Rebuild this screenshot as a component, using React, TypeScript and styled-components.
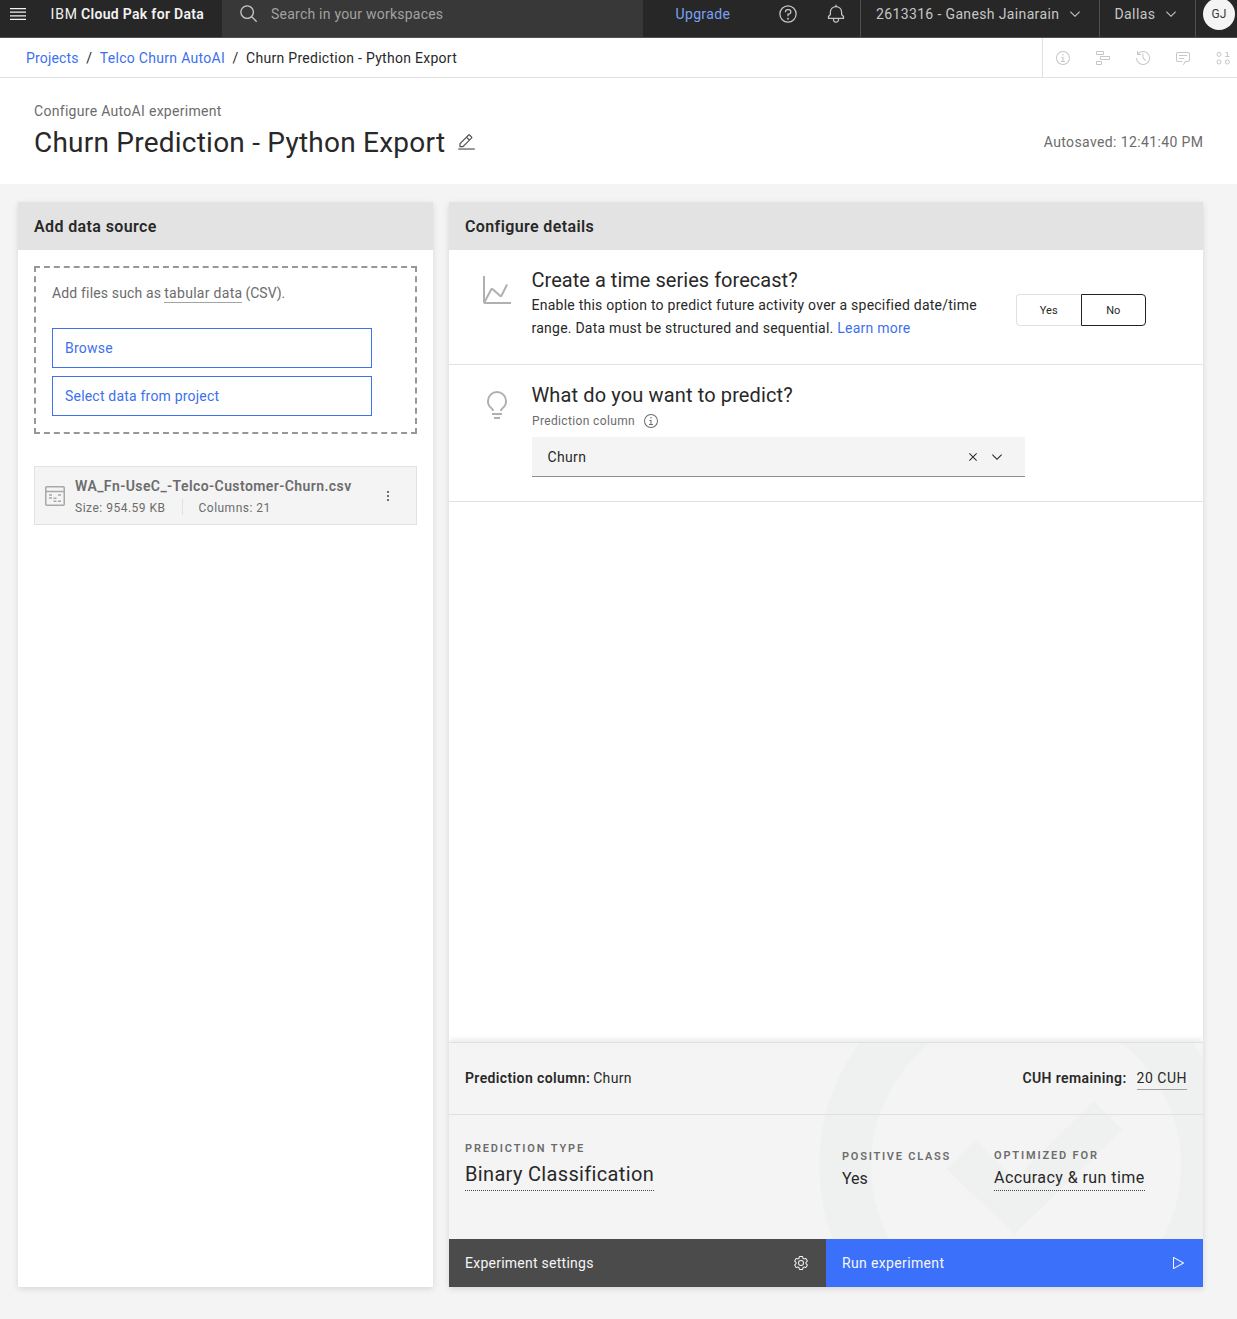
import React from 'react';
import styled, { createGlobalStyle, css } from 'styled-components';

const color = {
  text: '#282828',
  muted: '#6c6c6c',
  link: '#3d70ee',
  line: '#e2e2e2',
  layer: '#f4f4f4',
  header: '#272727',
};

const GlobalStyle = createGlobalStyle`
  *, *::before, *::after { box-sizing: border-box; }
  body {
    margin: 0;
    background: ${color.layer};
    color: ${color.text};
    font: 400 14px/18px Roboto, sans-serif;
    letter-spacing: 0.3px;
    overflow: hidden;
  }
  h1, h2, h3, p { margin: 0; font-weight: inherit; }
  button { font: inherit; letter-spacing: inherit; color: inherit; border: 0; background: none; padding: 0; margin: 0; text-align: left; }
  a { color: ${color.link}; text-decoration: none; }
  svg { display: block; flex: none; fill: currentColor; }
`;

/* Icons */

const paths = {
  search: ['M29,27.5859l-7.5521-7.5521a11.0177,11.0177,0,1,0-1.4141,1.4141L27.5859,29ZM4,13a9,9,0,1,1,9,9A9.01,9.01,0,0,1,4,13Z'],
  help: [
    'M16,2A14,14,0,1,0,30,16,14,14,0,0,0,16,2Zm0,26A12,12,0,1,1,28,16,12,12,0,0,1,16,28Z',
    'M16,22a1.5,1.5,0,1,0,1.5,1.5A1.5,1.5,0,0,0,16,22Z',
    'M17,8H15.5A4.49,4.49,0,0,0,11,12.5V13h2v-.5A2.5,2.5,0,0,1,15.5,10H17a2.5,2.5,0,0,1,0,5H15v4.5h2V17a4.5,4.5,0,0,0,0-9Z',
  ],
  bell: [
    'M28.7071,19.293,26,16.5859V13a10.0136,10.0136,0,0,0-9-9.9492V1H15V3.0508A10.0136,10.0136,0,0,0,6,13v3.5859L3.2929,19.293A1,1,0,0,0,3,20v3a1,1,0,0,0,1,1h7v.7768a5.152,5.152,0,0,0,4.5,5.1987A5.0057,5.0057,0,0,0,21,25V24h7a1,1,0,0,0,1-1V20A1,1,0,0,0,28.7071,19.293ZM19,25a3,3,0,0,1-6,0V24h6Zm8-3H5V20.4141L7.707,17.707A1,1,0,0,0,8,17V13a8,8,0,0,1,16,0v4a1,1,0,0,0,.293.707L27,20.4141Z',
  ],
  chevron: ['M16,22L6,12L7.4,10.6L16,19.2L24.6,10.6L26,12Z'],
  close: ['M24 9.4L22.6 8L16 14.6L9.4 8L8 9.4L14.6 16L8 22.6L9.4 24L16 17.4L22.6 24L24 22.6L17.4 16Z'],
  info: [
    'M17 22L17 14L13 14L13 16L15 16L15 22L12 22L12 24L20 24L20 22Z',
    'M16,8a1.5,1.5,0,1,0,1.5,1.5A1.5,1.5,0,0,0,16,8Z',
    'M16,30A14,14,0,1,1,30,16,14,14,0,0,1,16,30ZM16,4A12,12,0,1,0,28,16,12,12,0,0,0,16,4Z',
  ],
  roadmap: [
    'M12,30H4a2,2,0,0,1-2-2V24a2,2,0,0,1,2-2h8a2,2,0,0,1,2,2v4A2,2,0,0,1,12,30ZM4,24v4h8V24Z',
    'M28,20H12a2,2,0,0,1-2-2V14a2,2,0,0,1,2-2H28a2,2,0,0,1,2,2v4A2,2,0,0,1,28,20ZM12,14v4H28V14Z',
    'M16,10H4A2,2,0,0,1,2,8V4A2,2,0,0,1,4,2H16a2,2,0,0,1,2,2V8A2,2,0,0,1,16,10ZM4,4V8H16V4Z',
  ],
  history: [
    'M20.59 22L15 16.41L15 7L17 7L17 15.58L22 20.59Z',
    'M16,2A13.94,13.94,0,0,0,6,6.23V2H4v8h8V8H7.08A12,12,0,1,1,4,16H2A14,14,0,1,0,16,2Z',
  ],
  chat: [
    'M17.74,30,16,29l4-7h6a2,2,0,0,0,2-2V8a2,2,0,0,0-2-2H6A2,2,0,0,0,4,8V20a2,2,0,0,0,2,2h9v2H6a4,4,0,0,1-4-4V8A4,4,0,0,1,6,4H26a4,4,0,0,1,4,4V20a4,4,0,0,1-4,4H21.16Z',
    'M8 10H24V12H8z',
    'M8 16H18V18H8z',
  ],
  edit: [
    'M2 26H30V28H2z',
    'M25.4,9c0.8-0.8,0.8-2,0-2.8L21.8,2.6c-0.8-0.8-2-0.8-2.8,0l-15,15V24h6.4L25.4,9z M20.4,4L24,7.6l-3,3L17.4,7L20.4,4z M6,22v-3.6l10-10l3.6,3.6l-10,10H6z',
  ],
  chart: [
    'M4.67,28l6.39-12,7.3,6.49a2,2,0,0,0,1.7.47,2,2,0,0,0,1.42-1.07L27,10.9,25.18,10,19.7,21,12.42,14.49a2,2,0,0,0-1.66-.47A2,2,0,0,0,9.32,15L4,25.05V2H2V28a2,2,0,0,0,2,2H30V28Z',
  ],
  idea: [
    'M11 24H21V26H11z',
    'M13 28H19V30H13z',
    'M16,2A10,10,0,0,0,6,12a9.19,9.19,0,0,0,3.46,7.62c1,.93,1.54,1.46,1.54,2.38h2c0-1.84-1.11-2.87-2.19-3.86A7.2,7.2,0,0,1,8,12a8,8,0,0,1,16,0,7.2,7.2,0,0,1-2.82,6.14c-1.07,1-2.18,2-2.18,3.86h2c0-.92.53-1.45,1.54-2.39A9.18,9.18,0,0,0,26,12,10,10,0,0,0,16,2Z',
  ],
  settings: [
    'M27,16.76c0-.25,0-.5,0-.76s0-.51,0-.77l1.92-1.68A2,2,0,0,0,29.3,11L26.94,7a2,2,0,0,0-1.73-1,2,2,0,0,0-.64.1l-2.43.82a11.35,11.35,0,0,0-1.31-.75l-.51-2.52a2,2,0,0,0-2-1.61H13.64a2,2,0,0,0-2,1.61l-.51,2.52a11.48,11.48,0,0,0-1.32.75L7.43,6.06A2,2,0,0,0,6.79,6,2,2,0,0,0,5.06,7L2.7,11a2,2,0,0,0,.41,2.51L5,15.24c0,.25,0,.5,0,.76s0,.51,0,.77L3.11,18.45A2,2,0,0,0,2.7,21L5.06,25a2,2,0,0,0,1.73,1,2,2,0,0,0,.64-.1l2.43-.82a11.35,11.35,0,0,0,1.31.75l.51,2.52a2,2,0,0,0,2,1.61h4.72a2,2,0,0,0,2-1.61l.51-2.52a11.48,11.48,0,0,0,1.32-.75l2.42.82a2,2,0,0,0,.64.1,2,2,0,0,0,1.73-1L29.3,21a2,2,0,0,0-.41-2.51ZM25.21,24l-3.43-1.16a8.86,8.86,0,0,1-2.71,1.57L18.36,28H13.64l-.71-3.55a9.36,9.36,0,0,1-2.7-1.57L6.79,24,4.43,20l2.72-2.4a8.9,8.9,0,0,1,0-3.13L4.43,12,6.79,8l3.43,1.16a8.86,8.86,0,0,1,2.71-1.57L13.64,4h4.72l.71,3.55a9.36,9.36,0,0,1,2.7,1.57L25.21,8,27.57,12l-2.72,2.4a8.9,8.9,0,0,1,0,3.13L27.57,20Z',
    'M16,22a6,6,0,1,1,6-6A5.94,5.94,0,0,1,16,22Zm0-10a3.91,3.91,0,0,0-4,4,3.91,3.91,0,0,0,4,4,3.91,3.91,0,0,0,4-4A3.91,3.91,0,0,0,16,12Z',
  ],
  play: ['M7,28a1,1,0,0,1-1-1V5a1,1,0,0,1,1.4819-.8763l20,11a1,1,0,0,1,0,1.7525l-20,11A1.0005,1.0005,0,0,1,7,28ZM8,6.6909V25.3088L24.9248,16Z'],
};

function Icon({ name, size = 16 }: { name: keyof typeof paths; size?: number }) {
  return (
    <svg width={size} height={size} viewBox="0 0 32 32" aria-hidden>
      {paths[name].map((d) => <path key={d} d={d} />)}
    </svg>
  );
}

const MenuIcon = () => (
  <svg width="20" height="20" viewBox="0 0 20 20" aria-hidden>
    <path d="M2 4H18V5.2H2zM2 7.6H18V8.8H2zM2 11.2H18V12.4H2zM2 14.8H18V16H2z" />
  </svg>
);

const BinaryIcon = () => (
  <svg width="16" height="16" viewBox="0 0 16 16" aria-hidden>
    <g fill="none" stroke="currentColor">
      <circle cx="4" cy="4.4" r="2" />
      <circle cx="4" cy="12" r="2" />
      <circle cx="12.3" cy="12" r="2" />
      <path d="M10.5 2.5h2v4M10.3 6.5h4.2" />
    </g>
  </svg>
);

const DotsIcon = () => (
  <svg width="16" height="16" viewBox="0 0 16 16" aria-hidden>
    <path d="M7 3H9V5H7zM7 7H9V9H7zM7 11H9V13H7z" />
  </svg>
);

const TableIcon = () => (
  <svg width="20" height="20" viewBox="0 0 20 20" aria-hidden>
    <g fill="none" stroke="currentColor" strokeWidth="1.5">
      <rect x=".75" y=".75" width="18.5" height="18.5" rx="1" />
      <path d="M.7 5.5H19.3M4 9H7M13 9H16M4 12H7M8.5 12.2H11.5M8.5 15.2H11.5M13 15.2H16" />
    </g>
  </svg>
);

/* Text */

const Text = styled.span<{ $ls?: number; $size?: number; $bold?: boolean }>`
  white-space: nowrap;
  ${(p) => p.$ls !== undefined && css`letter-spacing: ${p.$ls}px;`}
  ${(p) => p.$size && css`font-size: ${p.$size}px;`}
  ${(p) => p.$bold && css`font-weight: 600;`}
`;

const Term = styled(Text)<{ $dotted?: boolean; $pad?: number }>`
  display: inline-block;
  padding-bottom: ${(p) => p.$pad ?? 0}px;
  border-bottom: 1px ${(p) => (p.$dotted ? 'dotted #4a4a4a' : 'solid #a3a3a3')};
`;

const TermSlot = styled.span`
  display: inline-block;
  height: 20px;
`;

/* Top bar */

const TopBar = styled.header`
  display: flex;
  height: 38px;
  background: ${color.header};
  border-bottom: 1px solid #505050;
  color: #c6c6c6;
  overflow: hidden;
`;

const BarItem = styled.div<{ $width: number; $pad?: number; $gap?: number; $divided?: boolean }>`
  display: flex;
  align-items: center;
  flex: none;
  width: ${(p) => p.$width}px;
  height: 37px;
  gap: ${(p) => p.$gap ?? 0}px;
  padding: 0 0 9px ${(p) => p.$pad ?? 0}px;
  ${(p) => p.$divided && css`border-left: 1px solid #505050;`}
`;

const Brand = styled(BarItem)`
  color: #f3f3f3;
`;

const BrandName = styled.span`
  margin-left: 22.5px;
  letter-spacing: 0.9px;
`;

const SearchBox = styled(BarItem)`
  background: #383838;
  color: #a2a2a2;
  svg { color: #c6c6c6; }
`;

const Upgrade = styled(Text)`
  color: #78a3f5;
`;

const Avatar = styled.div`
  display: flex;
  align-items: center;
  justify-content: center;
  flex: none;
  width: 32px;
  height: 32px;
  border-radius: 50%;
  background: #f4f4f4;
  color: #393939;
  font-size: 12px;
  letter-spacing: 0;
`;

/* Breadcrumb */

const SubBar = styled.nav`
  display: flex;
  height: 40px;
  padding-left: 26px;
  background: #fff;
  border-bottom: 1px solid ${color.line};
  overflow: hidden;
`;

const Crumbs = styled.div`
  display: flex;
  align-items: center;
  flex: 1;
  padding-top: 1px;
`;

const Slash = styled.span`
  width: 21px;
  text-align: center;
`;

const Tools = styled.div`
  display: flex;
  width: 195px;
  border-left: 1px solid ${color.line};
  color: #c6c6c6;
`;

const Tool = styled.button`
  display: grid;
  place-items: center;
  flex: none;
  width: 40px;
  padding-top: 1px;
`;

/* Page title */

const TitleArea = styled.div`
  display: flex;
  align-items: flex-end;
  justify-content: space-between;
  height: 106px;
  padding: 0 34px 23px;
  background: #fff;
`;

const Muted = styled.p`
  color: ${color.muted};
`;

const TitleRow = styled.div`
  display: flex;
  align-items: center;
  gap: 11.5px;
  height: 36px;
  margin-top: 5px;
  svg { color: #525252; margin-top: -1px; }
`;

const Title = styled.h1`
  font-size: 28px;
  line-height: 36px;
  letter-spacing: 0.23px;
`;

const Autosaved = styled.div`
  height: 28px;
  color: ${color.muted};
  letter-spacing: 0.38px;
  margin-right: -0.4px;
`;

/* Panels */

const Workspace = styled.main`
  display: grid;
  grid-template-columns: 415px 754px;
  gap: 16px;
  height: 1135px;
  padding: 18px 0 32px 18px;
`;

const Panel = styled.section`
  display: flex;
  flex-direction: column;
  background: #fff;
  box-shadow: 0 2px 6px rgba(0, 0, 0, 0.12);
`;

const PanelHeader = styled.h2`
  height: 48px;
  padding: 1px 0 0 16px;
  background: #e3e3e3;
  font-size: 16px;
  font-weight: 600;
  line-height: 48px;
  letter-spacing: 0.38px;
`;

const DropZone = styled.div`
  height: 168px;
  margin: 16px 16px 32px;
  padding: 16px;
  border: 2px dashed #979797;
  color: ${color.muted};
`;

const DropHint = styled.p`
  display: flex;
  height: 44px;
  gap: 3px;
`;

const OutlineButton = styled.button`
  display: block;
  width: 320px;
  height: 40px;
  margin-bottom: 8px;
  padding-left: 12px;
  border: 1px solid ${color.link};
  color: ${color.link};
`;

const FileCard = styled.div`
  display: flex;
  align-items: center;
  height: 59px;
  margin: 0 16px;
  padding: 0 20px 0 10px;
  background: ${color.layer};
  border: 1px solid ${color.line};
  color: ${color.muted};
`;

const FileGlyph = styled.div`
  color: #a8a8a8;
`;

const FileInfo = styled.div`
  flex: 1;
  padding: 3px 0 0 10px;
`;

const FileMeta = styled.div`
  display: flex;
  align-items: center;
  height: 18px;
  margin-top: 4px;
`;

const MetaDivider = styled.i`
  width: 1px;
  height: 16px;
  margin: -2px 15.5px 0 16.5px;
  background: ${color.line};
`;

const Question = styled.div<{ $height: number }>`
  display: flex;
  height: ${(p) => p.$height}px;
  padding-left: 32px;
  border-bottom: 1px solid ${color.line};
`;

const QuestionIcon = styled.div`
  width: 51px;
  padding-top: 24px;
  color: #b0b0b0;
`;

const QuestionBody = styled.div`
  flex: none;
  width: 493px;
  padding-top: 17px;
`;

const QuestionTitle = styled.h3<{ $ls: number }>`
  margin: 0 0 1px -0.5px;
  font-size: 20px;
  line-height: 26px;
  letter-spacing: ${(p) => p.$ls}px;
`;

const Description = styled.p`
  margin-left: -0.5px;
  line-height: 23px;
  letter-spacing: 0.24px;
  white-space: nowrap;
`;

const Switcher = styled.div`
  display: flex;
  width: 130px;
  height: 32px;
  margin: 44px 0 0 -9px;
  font-size: 11px;
  letter-spacing: 0;
`;

const Option = styled.button<{ $selected?: boolean }>`
  flex: 1;
  padding-top: 1px;
  text-align: center;
  border: 1px solid ${(p) => (p.$selected ? '#222' : '#e0e0e0')};
  ${(p) => (p.$selected
    ? css`border-radius: 0 4px 4px 0;`
    : css`border-radius: 4px 0 0 4px; border-right: 0;`)}
`;

const FieldLabel = styled.div`
  display: flex;
  align-items: center;
  gap: 8px;
  height: 16px;
  margin: 4px 0 8px;
  padding-top: 1px;
  box-sizing: content-box;
  color: ${color.muted};
`;

const Select = styled.div`
  display: flex;
  align-items: center;
  height: 40px;
  gap: 8px;
  padding: 0 20px 0 15.5px;
  background: ${color.layer};
  border-bottom: 1px solid #8d8d8d;
`;

const SelectValue = styled(Text)`
  flex: 1;
`;

/* Summary footer */

const Spacer = styled.div`
  flex: 1;
`;

const Summary = styled.div`
  position: relative;
  height: 197px;
  background: ${color.layer};
  border-top: 1px solid #e0e0e0;
  box-shadow: 0 -2px 6px rgba(0, 0, 0, 0.1);
  clip-path: inset(-10px 0 0 0);
`;

const Watermark = styled.svg`
  position: absolute;
  top: 0;
  right: 0;
  color: #eff1f0;
`;

const SummaryRow = styled.div`
  position: relative;
  display: flex;
  justify-content: space-between;
  height: 72px;
  padding: 26px 16px 0;
  border-bottom: 1px solid #e0e0e0;
`;

const Pair = styled.div<{ $gap: number }>`
  display: flex;
  gap: ${(p) => p.$gap}px;
`;

const SummaryGrid = styled.div`
  position: relative;
  display: grid;
  grid-template-columns: 377px 152px auto;
  padding-left: 16px;
`;

const Fact = styled.div<{ $top: number }>`
  display: flex;
  flex-direction: column;
  align-items: flex-start;
  padding-top: ${(p) => p.$top}px;
`;

const FactLabel = styled(Text)`
  color: ${color.muted};
  font-size: 11px;
  line-height: 14px;
  font-weight: 600;
`;

const FactLarge = styled(Term)`
  margin-top: 5px;
  font-size: 20px;
  line-height: 26px;
`;

const FactValue = styled(Text)`
  margin-top: 4px;
  font-size: 16px;
  line-height: 22px;
  letter-spacing: 0;
`;

const FactValueTerm = styled(Term)`
  margin-top: 4px;
  font-size: 16px;
  line-height: 22px;
`;

const Actions = styled.div`
  display: grid;
  grid-template-columns: 1fr 1fr;
  height: 48px;
`;

const Action = styled.button<{ $primary?: boolean }>`
  display: flex;
  align-items: center;
  justify-content: space-between;
  padding: 0 17px 0 16px;
  background: ${(p) => (p.$primary ? '#3b70fb' : '#4b4b4b')};
  color: #f6f6f6;
`;

const CheckWatermark = () => (
  <Watermark width="384" height="196" viewBox="0 0 384 196" aria-hidden>
    <circle cx="207" cy="122.5" r="181" fill="none" stroke="currentColor" strokeWidth="52" />
    <path fill="currentColor" d="M156 97L127 125.7L195.5 191.3L303.6 86.5L275 57.7L196 136Z" />
  </Watermark>
);

export default function App() {
  return (
    <>
      <GlobalStyle />
      <TopBar>
        <Brand $width={222} $pad={8}>
          <MenuIcon />
          <Pair $gap={3}>
            <BrandName>IBM</BrandName>
            <Text $bold $ls={0.32}>Cloud Pak for Data</Text>
          </Pair>
        </Brand>
        <SearchBox $width={421} $pad={17} $gap={12}>
          <Icon name="search" size={20} />
          <Text $ls={0.23}>Search in your workspaces</Text>
        </SearchBox>
        <BarItem $width={135} $pad={32.5}><Upgrade $ls={0.35}>Upgrade</Upgrade></BarItem>
        <BarItem $width={48}><Icon name="help" size={20} /></BarItem>
        <BarItem $width={34}><Icon name="bell" size={20} /></BarItem>
        <BarItem $width={239} $pad={15} $gap={7.5} $divided>
          <Text $ls={0.36}>2613316 - Ganesh Jainarain</Text>
          <Icon name="chevron" />
        </BarItem>
        <BarItem $width={96} $pad={14.5} $gap={8} $divided>
          <Text $ls={0.4}>Dallas</Text>
          <Icon name="chevron" />
        </BarItem>
        <BarItem $width={42} $pad={7} $divided><Avatar>GJ</Avatar></BarItem>
      </TopBar>

      <SubBar>
        <Crumbs>
          <a href="#"><Text $ls={0.18}>Projects</Text></a>
          <Slash>/</Slash>
          <a href="#"><Text $ls={0.3}>Telco Churn AutoAI</Text></a>
          <Slash>/</Slash>
          <Text $ls={0.28}>Churn Prediction - Python Export</Text>
        </Crumbs>
        <Tools>
          <Tool><Icon name="info" /></Tool>
          <Tool><Icon name="roadmap" /></Tool>
          <Tool><Icon name="history" /></Tool>
          <Tool><Icon name="chat" /></Tool>
          <Tool><BinaryIcon /></Tool>
        </Tools>
      </SubBar>

      <TitleArea>
        <div>
          <Muted>Configure AutoAI experiment</Muted>
          <TitleRow>
            <Title>Churn Prediction - Python Export</Title>
            <Icon name="edit" size={19} />
          </TitleRow>
        </div>
        <Autosaved>Autosaved: 12:41:40 PM</Autosaved>
      </TitleArea>

      <Workspace>
        <Panel>
          <PanelHeader>Add data source</PanelHeader>
          <DropZone>
            <DropHint>
              <Text $ls={0.16}>Add files such as</Text>
              <TermSlot><Term $ls={0.29}>tabular data</Term></TermSlot>
              <Text $ls={0}>(CSV).</Text>
            </DropHint>
            <OutlineButton><Text $ls={0.25}>Browse</Text></OutlineButton>
            <OutlineButton><Text $ls={0.2}>Select data from project</Text></OutlineButton>
          </DropZone>
          <FileCard>
            <FileGlyph><TableIcon /></FileGlyph>
            <FileInfo>
              <Text $bold $ls={0.41}>WA_Fn-UseC_-Telco-Customer-Churn.csv</Text>
              <FileMeta>
                <Text $size={12} $ls={0.5}>Size: 954.59 KB</Text>
                <MetaDivider />
                <Text $size={12} $ls={0.48}>Columns: 21</Text>
              </FileMeta>
            </FileInfo>
            <DotsIcon />
          </FileCard>
        </Panel>

        <Panel>
          <PanelHeader>Configure details</PanelHeader>
          <Question $height={115}>
            <QuestionIcon><Icon name="chart" size={32} /></QuestionIcon>
            <QuestionBody>
              <QuestionTitle $ls={0.03}>Create a time series forecast?</QuestionTitle>
              <Description>
                Enable this option to predict future activity over a specified date/time
                <br />
                range. Data must be structured and sequential. <a href="#">Learn more</a>
              </Description>
            </QuestionBody>
            <Switcher>
              <Option>Yes</Option>
              <Option $selected>No</Option>
            </Switcher>
          </Question>
          <Question $height={137}>
            <QuestionIcon><Icon name="idea" size={32} /></QuestionIcon>
            <QuestionBody>
              <QuestionTitle $ls={0.13}>What do you want to predict?</QuestionTitle>
              <FieldLabel>
                <Text $size={12} $ls={0.36}>Prediction column</Text>
                <Icon name="info" />
              </FieldLabel>
              <Select>
                <SelectValue $ls={0.35}>Churn</SelectValue>
                <Icon name="close" />
                <Icon name="chevron" />
              </Select>
            </QuestionBody>
          </Question>
          <Spacer />
          <Summary>
            <CheckWatermark />
            <SummaryRow>
              <Pair $gap={3}>
                <Text $bold $ls={0.38}>Prediction column:</Text>
                <Text $ls={0.35}>Churn</Text>
              </Pair>
              <Pair $gap={10}>
                <Text $bold $ls={0.4}>CUH remaining:</Text>
                <TermSlot><Term $ls={0.5} $pad={2}>20 CUH</Term></TermSlot>
              </Pair>
            </SummaryRow>
            <SummaryGrid>
              <Fact $top={27}>
                <FactLabel $ls={1.85}>PREDICTION TYPE</FactLabel>
                <FactLarge $dotted $pad={3} $ls={0.34}>Binary Classification</FactLarge>
              </Fact>
              <Fact $top={35}>
                <FactLabel $ls={1.76}>POSITIVE CLASS</FactLabel>
                <FactValue>Yes</FactValue>
              </Fact>
              <Fact $top={34}>
                <FactLabel $ls={1.85}>OPTIMIZED FOR</FactLabel>
                <FactValueTerm $dotted $pad={1} $ls={0.44}>Accuracy &amp; run time</FactValueTerm>
              </Fact>
            </SummaryGrid>
          </Summary>
          <Actions>
            <Action><Text $ls={0.25}>Experiment settings</Text><Icon name="settings" /></Action>
            <Action $primary><Text $ls={0.36}>Run experiment</Text><Icon name="play" /></Action>
          </Actions>
        </Panel>
      </Workspace>
    </>
  );
}
